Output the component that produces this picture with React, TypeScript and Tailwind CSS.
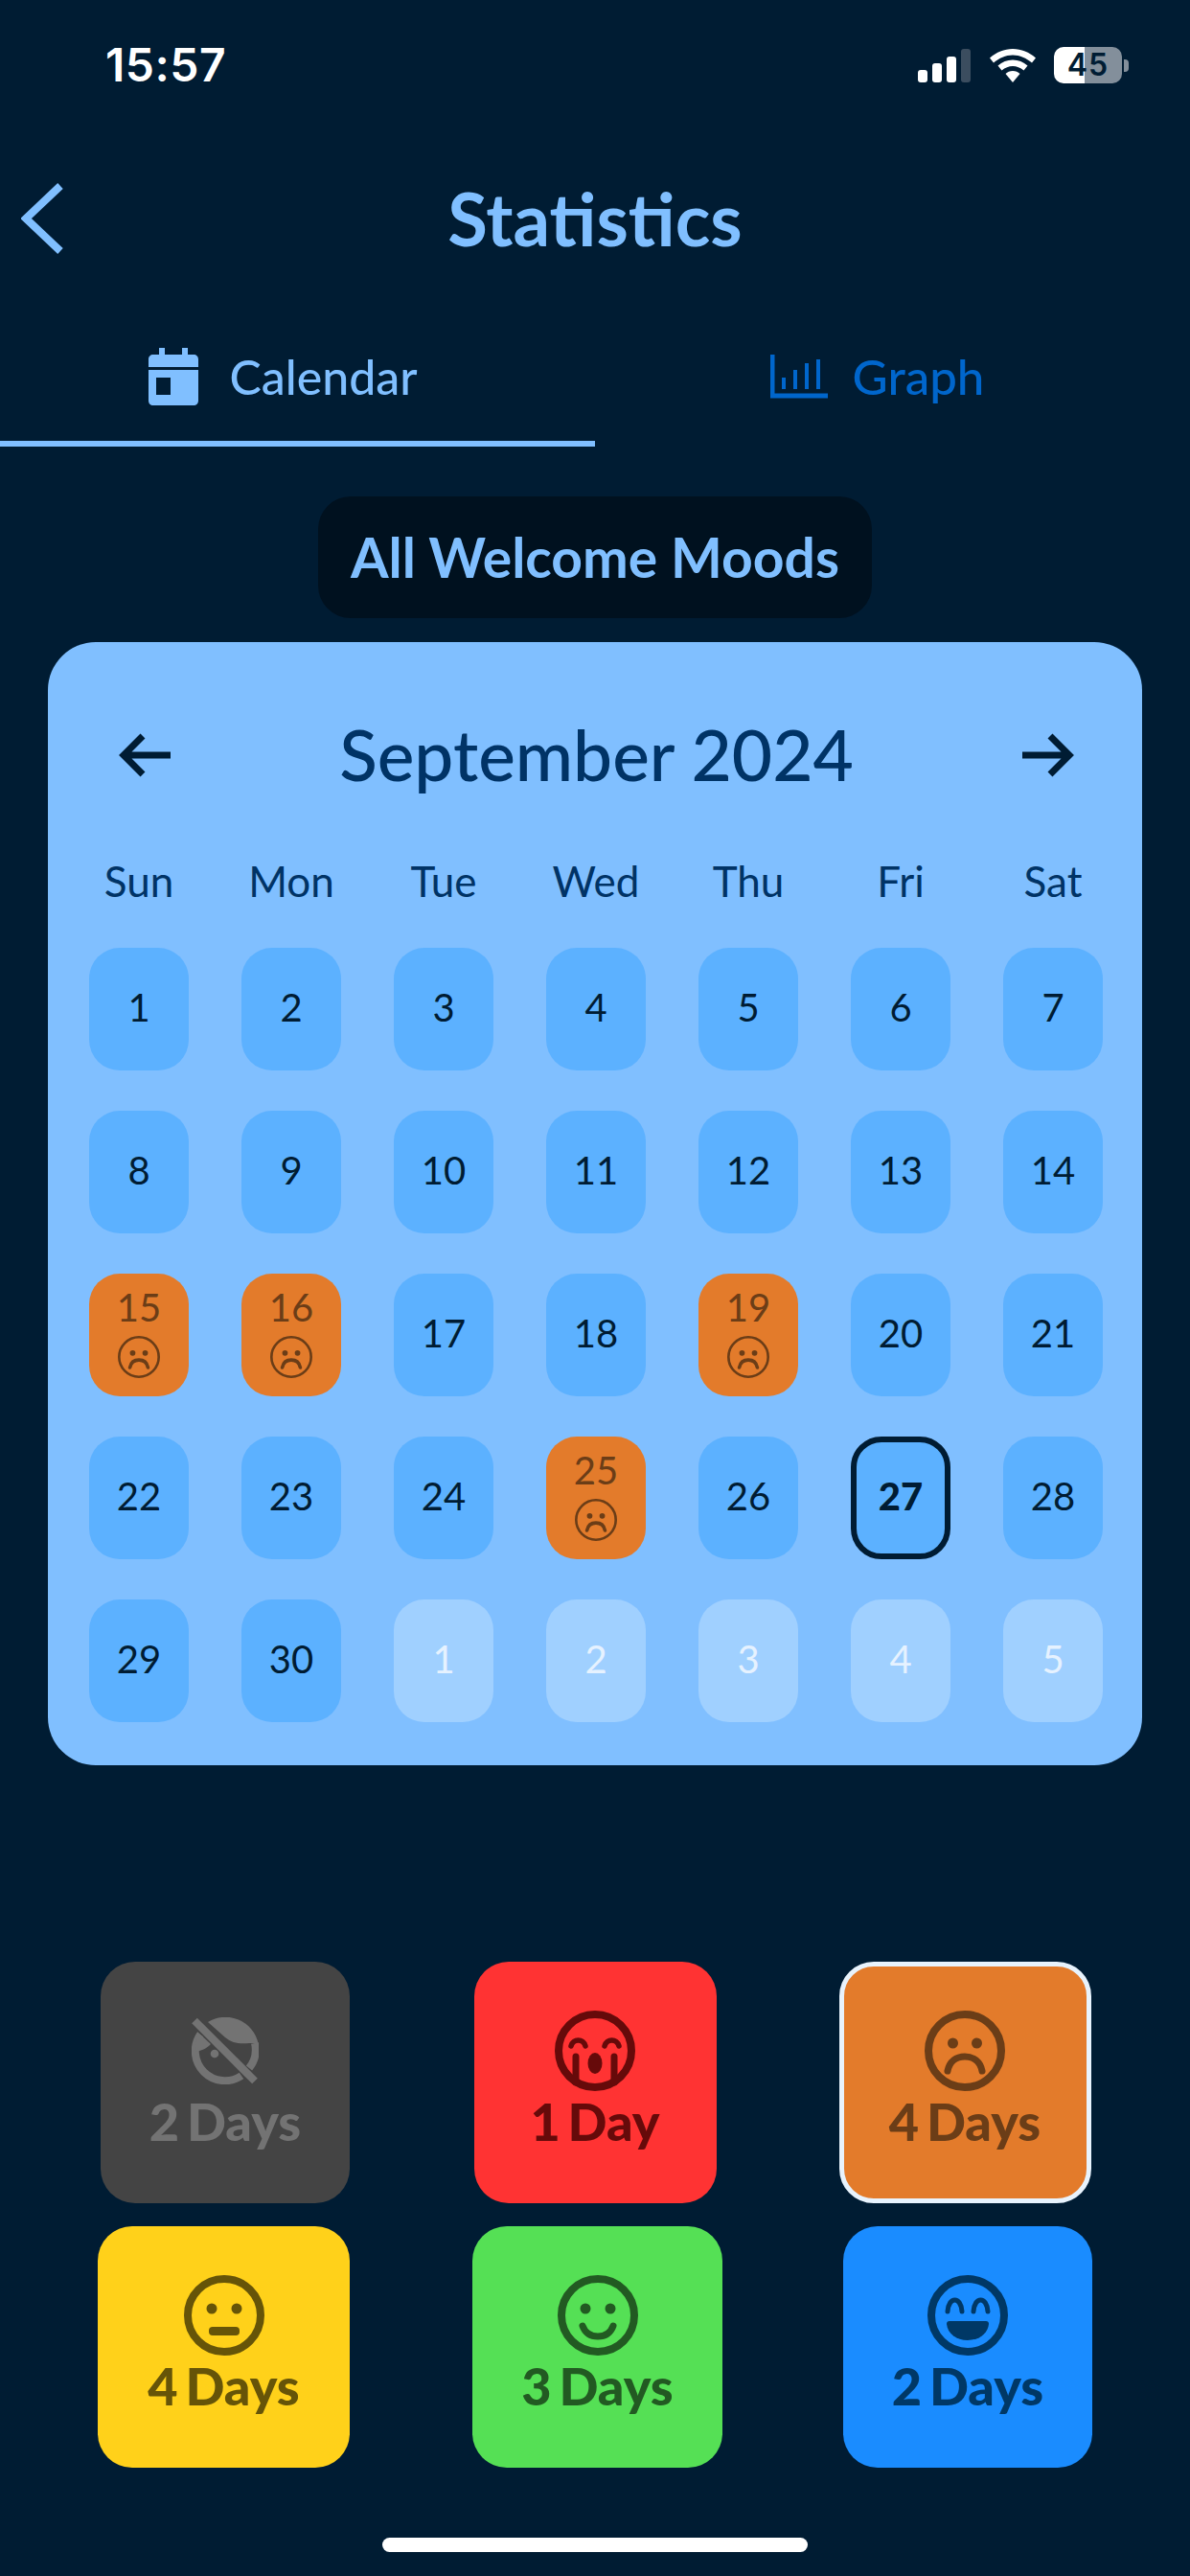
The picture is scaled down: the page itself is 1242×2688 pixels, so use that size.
const font = "font-['Lato','Noto_Sans',sans-serif]"

type Cell = { day: number; kind?: 'sad' | 'today' | 'next' }

const cells: Cell[] = [
  ...Array.from({ length: 30 }, (_, i): Cell => {
    const day = i + 1
    if ([15, 16, 19, 25].includes(day)) return { day, kind: 'sad' }
    if (day === 27) return { day, kind: 'today' }
    return { day }
  }),
  ...[1, 2, 3, 4, 5].map((day): Cell => ({ day, kind: 'next' })),
]

function Face({ size, stroke = 8, children }: { size: number; stroke?: number; children: React.ReactNode }) {
  return (
    <svg width={size} height={size} viewBox="0 0 84 84" fill="currentColor">
      <circle cx="42" cy="42" r={42 - stroke / 2} fill="none" stroke="currentColor" strokeWidth={stroke} />
      {children}
    </svg>
  )
}

function Sad({ size, stroke }: { size: number; stroke?: number }) {
  return (
    <Face size={size} stroke={stroke}>
      <ellipse cx="29.500" cy="34" rx="5.500" ry="5.500" />
      <ellipse cx="54.500" cy="34" rx="5.500" ry="5.500" />
      <path d="M24 63c2-10 9-15 18-15s16 5 18 15" fill="none" stroke="currentColor" strokeWidth="7" strokeLinecap="round" />
    </Face>
  )
}

function Crying() {
  return (
    <svg width="84" height="84" viewBox="0 0 84 84" fill="currentColor">
      <circle cx="42" cy="42" r="38" fill="none" stroke="currentColor" strokeWidth="8" />
      <path d="M17 37c2-8 13-8 15 0M52 37c2-8 13-8 15 0" fill="none" stroke="currentColor" strokeWidth="5.500" strokeLinecap="round" />
      <path d="M22 48v27M62 48v27" fill="none" stroke="currentColor" strokeWidth="7" strokeLinecap="round" />
      <ellipse cx="42" cy="55" rx="7.500" ry="11" />
    </svg>
  )
}

function Neutral() {
  return (
    <Face size={84}>
      <circle cx="29" cy="35" r="5.500" />
      <circle cx="55" cy="35" r="5.500" />
      <rect x="26" y="54" width="32" height="9" rx="4" />
    </Face>
  )
}

function Smile() {
  return (
    <Face size={84}>
      <circle cx="29" cy="35" r="5.500" />
      <circle cx="55" cy="35" r="5.500" />
      <path d="M26 53c3 8 9 11 16 11s13-3 16-11" fill="none" stroke="currentColor" strokeWidth="7" strokeLinecap="round" />
    </Face>
  )
}

function Laugh() {
  return (
    <Face size={84}>
      <path d="M21 38c1-16 14-16 15 0M48 38c1-16 14-16 15 0" fill="none" stroke="currentColor" strokeWidth="5" strokeLinecap="round" />
      <path d="M23 48h38c2 0 3 1 3 3-1 10-10 17-22 17s-21-7-22-17c0-2 1-3 3-3z" />
    </Face>
  )
}

function NoFace() {
  return (
    <svg width="70" height="70" viewBox="0 0 70 70" fill="currentColor">
      <path d="M17 5A35 35 0 0 1 69.500 27H60C50 28 42 27 35 21z" />
      <path d="M66 27A31 31 0 0 1 60 53" fill="none" stroke="currentColor" strokeWidth="8" />
      <path d="M9 18A31 31 0 0 0 52 61" fill="none" stroke="currentColor" strokeWidth="8" />
      <path d="M6 15 20 28C15 33 10 35 4 36z" />
      <circle cx="24" cy="38" r="4.300" />
      <path d="M3 3.500 66 66.500" fill="none" stroke="currentColor" strokeWidth="8" />
    </svg>
  )
}

const moods = [
  { label: '2 Days', icon: <NoFace />, wrap: '', box: 'w-[260px] bg-[#444444] text-[#737373] pt-[51px]' },
  { label: '1 Day', icon: <Crying />, wrap: '', box: 'w-[253px] bg-[#ff3333] text-[#660a0a] pt-[51px]' },
  { label: '4 Days', icon: <Sad size={84} />, wrap: '', box: 'w-[263px] bg-[#e37b2b] text-[#6b3d17] border-[5px] border-[#e8f3fd] pt-[46px]' },
  { label: '4 Days', icon: <Neutral />, wrap: 'pr-[3px]', box: 'w-[263px] bg-[#ffd11a] text-[#665408] pt-[51px]' },
  { label: '3 Days', icon: <Smile />, wrap: 'pl-[5px]', box: 'w-[261px] bg-[#55e055] text-[#225a22] pt-[51px]' },
  { label: '2 Days', icon: <Laugh />, wrap: 'pl-[6px]', box: 'w-[260px] bg-[#1a8cff] text-[#003866] pt-[51px]' },
]

function DayCell({ day, kind }: Cell) {
  if (kind === 'sad') {
    return (
      <div className="flex h-[128px] w-[104px] flex-col items-center rounded-[32px] bg-[#e37b2b] pt-[15px] text-[#6b3d17]">
        <span className="text-[40px] leading-[40px]">{day}</span>
        <span className="mt-[10px]"><Sad size={44} stroke={5} /></span>
      </div>
    )
  }
  if (kind === 'today') {
    return (
      <div className="flex h-[128px] w-[104px] items-center justify-center rounded-[32px] border-[6px] border-[#001c33] bg-[#5cb1ff] pb-[4px] text-[40px] font-black text-[#001c33]">
        {day}
      </div>
    )
  }
  if (kind === 'next') {
    return (
      <div className="flex h-[128px] w-[104px] items-center justify-center rounded-[32px] bg-[#a0d0ff] pb-[4px] text-[40px] text-[#e6f2ff]">
        {day}
      </div>
    )
  }
  return (
    <div className="flex h-[128px] w-[104px] items-center justify-center rounded-[32px] bg-[#5cb1ff] pb-[4px] text-[40px] text-[#001c33]">
      {day}
    </div>
  )
}

export default function App() {
  return (
    <div className={`${font} h-[2688px] w-[1242px] overflow-hidden bg-[#001c33] text-[#80bfff]`}>
      {/* status bar */}
      <div className="flex h-[136px] items-center justify-between pl-[110px] pr-[64px] text-white">
        <span className="font-['Inter',sans-serif] text-[48px] font-semibold tracking-[0.5px]">15:57</span>
        <div className="flex items-center">
          <div className="flex h-[35px] items-end gap-[5px]">
            <div className="h-[13px] w-[10px] rounded-[3px] bg-white" />
            <div className="h-[20px] w-[10px] rounded-[3px] bg-white" />
            <div className="h-[27px] w-[10px] rounded-[3px] bg-white" />
            <div className="h-[35px] w-[10px] rounded-[3px] bg-[#3b4d5f]" />
          </div>
          <svg className="ml-[20px]" width="48" height="35" viewBox="0 0 48 35" fill="white">
            <path d="M24 0c9 0 17 3.500 24 9.500l-4 5C38 9.500 31.500 6.500 24 6.500S10 9.500 4 14.500l-4-5C7 3.500 15 0 24 0z" />
            <path d="M24 11.500c6 0 11 2 15.500 6l-4 5C32 19.500 28 18 24 18s-8 1.500-11.500 4.500l-4-5c4.500-4 9.500-6 15.500-6z" />
            <path d="M24 23c3 0 5.500 1 7.500 3L24 35l-7.500-9c2-2 4.500-3 7.500-3z" />
          </svg>
          <div className="ml-[19px] flex h-[38px] w-[71px] items-center justify-center rounded-[10px] bg-[linear-gradient(90deg,#ffffff_45%,#838f9b_45%)] font-['Inter',sans-serif] text-[32px] font-semibold tracking-[1px] text-[#001c33]">
            45
          </div>
          <div className="ml-[2px] h-[13px] w-[5px] rounded-r-[4px] bg-[#838f9b]" />
        </div>
      </div>

      {/* header */}
      <div className="flex h-[184px] items-center">
        <svg className="ml-[22px]" width="44" height="74" viewBox="0 0 44 74" fill="none" stroke="#80bfff" strokeWidth="8">
          <path d="M41 3 5 37l36 34" />
        </svg>
        <h1 className="ml-[-66px] w-full text-center text-[76px] font-bold">Statistics</h1>
      </div>

      {/* tabs */}
      <div className="flex h-[146px]">
        <div className="flex w-[621px] items-center justify-center gap-[32px] border-b-[6px] border-[#80bfff] pr-[30px] pt-[6px]">
          <svg width="52" height="60" viewBox="0 0 52 60" fill="#80bfff">
            <path d="M11 0h6v7h18V0h6v7h6c3 0 5 2 5 5v8H0v-8c0-3 2-5 5-5h6zM0 23h52v32c0 3-2 5-5 5H5c-3 0-5-2-5-5zm8 8v18h15V31z" />
          </svg>
          <span className="text-[50px] font-medium">Calendar</span>
        </div>
        <div className="flex w-[621px] items-center justify-center gap-[26px] pr-[32px] text-[#0066cc]">
          <svg width="60" height="46" viewBox="0 0 60 46" fill="none" stroke="#0066cc">
            <path d="M2 0v43h58" strokeWidth="5" />
            <path d="M14 24v12M26 16v20M38 9v27M50 5v31" strokeWidth="4" />
          </svg>
          <span className="text-[51px] font-medium">Graph</span>
        </div>
      </div>

      {/* filter */}
      <div className="mt-[52px] flex justify-center">
        <div className="flex h-[127px] w-[578px] items-center justify-center rounded-[34px] bg-[#00111f] text-[57px] font-bold">
          All Welcome Moods
        </div>
      </div>

      {/* calendar */}
      <div className="ml-[50px] mt-[25px] h-[1172px] w-[1142px] rounded-[50px] bg-[#80bfff] pl-[43px] pt-[78px]">
        <div className="flex h-[80px] w-[1058px] items-center justify-between pl-[31px] pr-[30px]">
          <svg width="54" height="46" viewBox="0 0 54 46" fill="none" stroke="#001c33" strokeWidth="7">
            <path d="M25 3 5 23l20 20M5 23h49" />
          </svg>
          <span className="text-[73px] font-medium text-[#003366]">September 2024</span>
          <svg width="54" height="46" viewBox="0 0 54 46" fill="none" stroke="#001c33" strokeWidth="7">
            <path d="m29 3 20 20-20 20M49 23H0" />
          </svg>
        </div>
        <div className="mt-[67px] grid h-[50px] grid-cols-[repeat(7,104px)] gap-x-[55px] text-[#003366]">
          {['Sun', 'Mon', 'Tue', 'Wed', 'Thu', 'Fri', 'Sat'].map((d) => (
            <div key={d} className="text-center text-[44px] leading-[48px]">{d}</div>
          ))}
        </div>
        <div className="mt-[44px] grid grid-cols-[repeat(7,104px)] gap-x-[55px] gap-y-[42px]">
          {cells.map((c, i) => (
            <DayCell key={i} {...c} />
          ))}
        </div>
      </div>

      {/* mood totals */}
      <div className="mt-[205px] grid grid-cols-[repeat(3,386px)] justify-center gap-y-[24px]">
        {moods.map((m, i) => (
          <div key={i} className={`flex justify-center ${m.wrap}`}>
            <div className={`flex h-[252px] flex-col items-center rounded-[36px] ${m.box}`}>
              <div className="flex h-[84px] items-center">{m.icon}</div>
              <span className="text-[54px] font-black leading-[64px] [word-spacing:-5px]">{m.label}</span>
            </div>
          </div>
        ))}
      </div>

      {/* home indicator */}
      <div className="mx-auto mt-[73px] h-[15px] w-[444px] rounded-full bg-white" />
    </div>
  )
}
